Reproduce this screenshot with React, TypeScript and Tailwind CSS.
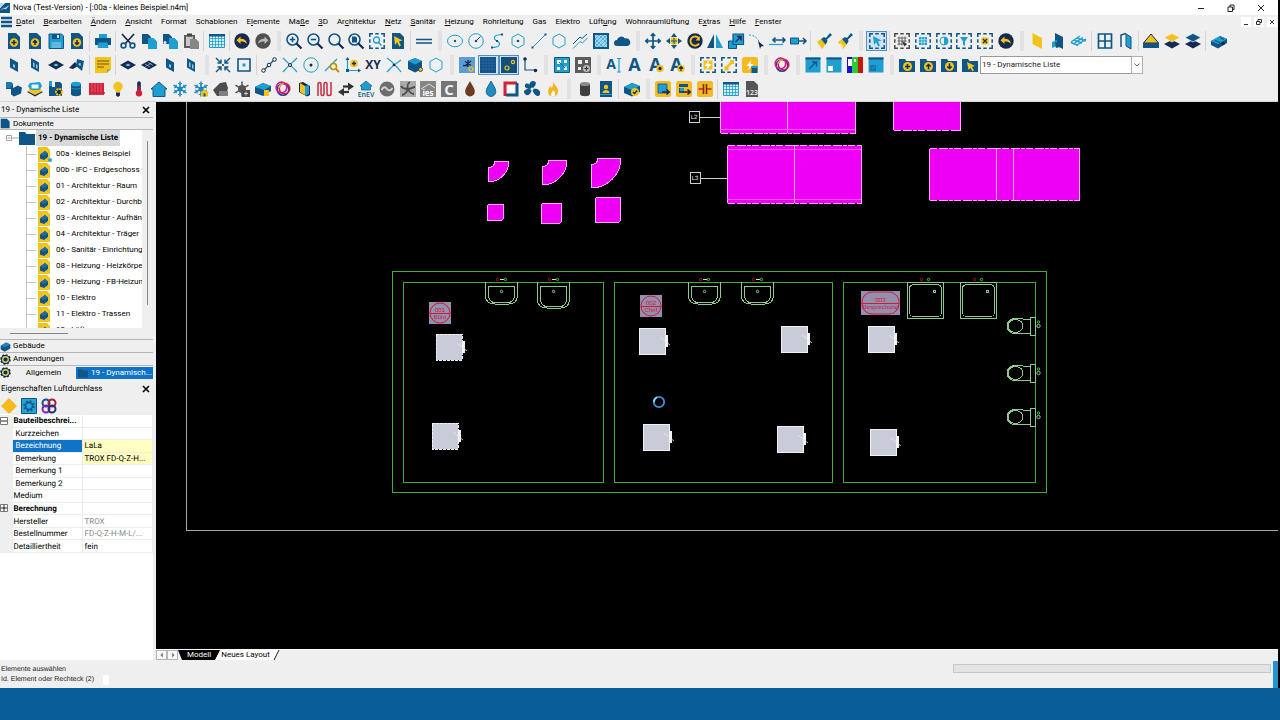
import { useState, type ReactNode } from 'react';
import clsx from 'clsx';

// Icon palette
const B = '#0f5687';
const C = '#1f9fd0';
const Y = '#f3c31d';
const D = '#16294f';
const G = '#5c5c5c';
const R = '#d5203c';

const stroke = (color: string, width = 1.3) => ({ fill: 'none', stroke: color, strokeWidth: width });

/* ---------- shared icon parts ---------- */

const PLUS = 'M8 7v5M5.5 9.5h5';
const UP = 'M8 12V7.5M6 9.5l2-2 2 2';
const DOWN = 'M8 7v4.5M6 9.5l2 2 2-2';

function DocBadge({ d }: { d: string }) {
  return (
    <>
      <path d="M2 0h8l4 4v12H2z" fill={B} />
      <circle cx="8" cy="9.5" r="4.2" fill={Y} />
      <path d={d} {...stroke(D, 1.5)} />
    </>
  );
}

function Folder({ d }: { d?: string }) {
  return (
    <>
      <path d="M0 2h6l1.500 2H16v11H0z" fill={B} />
      {d && <circle cx="8.500" cy="9.500" r="4.500" fill={Y} />}
      {d && <path d={d} {...stroke(D, 1.5)} />}
    </>
  );
}

function Lens({ d }: { d?: string }) {
  return (
    <>
      <circle cx="6.5" cy="6.5" r="5.5" {...stroke(B, 1.6)} />
      <path d="M10.5 10.500L15.500 15.500" {...stroke(D, 2.2)} />
      {d && <path d={d} {...stroke(B, 1.600)} />}
    </>
  );
}

function Marquee({ color = B, children }: { color?: string; children?: ReactNode }) {
  return (
    <>
      <path
        d="M.8 4V.8H4M6.300 .8h3.400M12 .8h3.200V4M15.200 6.300v3.400M15.200 12v3.200H12M9.700 15.200H6.300M4 15.200H.8V12M.8 9.700V6.300"
        {...stroke(color, 1.5)}
      />
      {children}
    </>
  );
}

function Layers({ top, bottom }: { top: string; bottom: string }) {
  return (
    <>
      <path d="M8 7l8 4-8 4.500L0 11z" fill={bottom} />
      <path d="M8 .5l8 4-8 4.500-8-4.500z" fill={top} stroke="#efefef" strokeWidth=".7" />
    </>
  );
}

function Rings() {
  return (
    <>
      <circle cx="8" cy="8.500" r="5.800" {...stroke('#1c3f94', 1.5)} />
      <circle cx="6.500" cy="6.500" r="5.300" {...stroke('#c21fae', 1.7)} />
      <circle cx="9.500" cy="7.500" r="5.300" {...stroke(R, 1.6)} />
      <path d="M4 7a4 4 0 0 1 5-4" {...stroke(Y, 1.200)} />
    </>
  );
}

function Sheet({ children }: { children?: ReactNode }) {
  return (
    <>
      <rect x=".5" y=".5" width="15" height="15" fill={C} />
      <path d="M.5 1.500h15" {...stroke(B, 2)} />
      {children}
    </>
  );
}

function Letter({ children }: { children?: ReactNode }) {
  return (
    <>
      <text x="7.500" y="14" textAnchor="middle" fontSize="18" fontWeight="700" fontFamily="Open Sans" fill={B}>A</text>
      {children}
    </>
  );
}

function Yellow({ children }: { children?: ReactNode }) {
  return (
    <>
      <rect x="0" y="0" width="16" height="16" rx="2.500" fill="#f5b922" />
      {children}
    </>
  );
}

const HEX = 'M8 1l6 3.500v7L8 15l-6-3.500v-7z';
const CURSOR = 'M4 3l8.500 4.500-3.500 1 2 4-1.800 1-2-4.200L5 12z';
const BOLT = 'M9.500 3L4.500 9h3L6 13.500 11.500 7H8.200z';
const CUBE = 'M8 1l7 3v8l-7 3.500L1 12V4z';
const SNOW = 'M8 .5v15M1.500 4.200l13 7.600M1.500 11.800l13-7.600';
const SNOW_TIPS = 'M6 2l2 2 2-2M6 14l2-2 2 2M2 7l2.500-1-.500-2.500M14 7l-2.500-1 .500-2.500M2 9l2.500 1-.500 2.500M14 9l-2.500 1 .500 2.500';
const HOUSE = 'M8 1L0 8h2v7.500h12V8h2z';
const DROP = 'M8 0C6 4 3.200 7 3.200 10.700a4.800 4.800 0 0 0 9.600 0C12.800 7 10 4 8 0z';

const icons: Record<string, ReactNode> = {
  docPlus: <DocBadge d={PLUS} />,
  docUp: <DocBadge d={UP} />,
  docDown: <DocBadge d={DOWN} />,
  docCursor: (
    <>
      <path d="M2 0h8l4 4v12H2z" fill={B} />
      <path d={CURSOR} fill={Y} />
    </>
  ),
  save: (
    <>
      <path d="M1 1h12.500L15.500 3v12.500H1z" fill={C} stroke={B} />
      <path d="M4 1h8v5H4z" fill={B} />
      <path d="M9 2h2v3H9z" fill="#bfe3f3" />
      <path d="M3.500 9h9.500v6H3.500z" fill="#5db9df" />
    </>
  ),
  print: (
    <>
      <path d="M4 1h8v4H4z" fill={C} />
      <path d="M0 5h16v7H0z" fill={B} />
      <path d="M3.500 9.500h9l1 5.500h-11z" fill={C} />
    </>
  ),
  cut: (
    <>
      <path d="M2 1l9 10M14 1L5 11" {...stroke(D, 1.700)} />
      <circle cx="3.500" cy="12.500" r="2.400" {...stroke(B, 1.600)} />
      <circle cx="12.500" cy="12.500" r="2.400" {...stroke(B, 1.600)} />
    </>
  ),
  copy: (
    <>
      <path d="M1 1h6l3 3v7H1z" fill={B} />
      <path d="M7 5h5.500L16 8.500V16H7z" fill={C} />
    </>
  ),
  copyDot: (
    <>
      <path d="M1 1h6l3 3v7H1z" fill={B} />
      <path d="M7 5h5.500L16 8.500V16H7z" fill={C} />
      <circle cx="3" cy="9.500" r="1.500" fill="#e8eef0" />
    </>
  ),
  clipboard: (
    <>
      <path d="M1 2h11v13H1z" fill={G} />
      <path d="M3 3.500h7V13H3z" fill="#c9c9c9" />
      <path d="M4 .5h5v3H4z" fill="#444" />
      <path d="M7 6h6l3 3v7H7z" fill="#858585" />
    </>
  ),
  table: (
    <>
      <path d="M.5 1.500h15v13H.5z" fill="#d9eef7" stroke={C} />
      <path d="M.5 5.500h15M.5 8.500h15M.5 11.500h15M3.500 3v11.500M6.500 3v11.500M9.500 3v11.500M12.500 3v11.500" {...stroke(C, .8)} />
      <path d="M0 1h16v2.500H0z" fill={B} />
    </>
  ),
  undo: (
    <>
      <circle cx="8" cy="8" r="7.700" fill={D} />
      <path d="M6.500 3.500v2.300c4 0 6 1.700 6.500 5-1.700-1.700-3.500-2.200-6.500-2.200V11L2.500 7.200z" fill={Y} />
    </>
  ),
  redo: (
    <>
      <circle cx="8" cy="8" r="7.700" fill="#505050" />
      <path d="M9.500 3.500v2.300c-4 0-6 1.700-6.500 5 1.700-1.700 3.500-2.200 6.500-2.200V11l4-3.800z" fill="#b9b9b9" />
    </>
  ),
  zoomIn: <Lens d="M6.500 3.800v5.400M3.800 6.500h5.400" />,
  zoomOut: <Lens d="M3.800 6.500h5.400" />,
  zoom: <Lens />,
  zoomPage: (
    <>
      <Lens />
      <path d="M4 3.500h3.500l1.500 1.500v4.500H4z" fill={B} />
    </>
  ),
  zoomArea: (
    <Marquee>
      <circle cx="7.500" cy="7" r="3" {...stroke(C, 1.3)} />
      <path d="M9.500 9.500l3 3" {...stroke(C, 1.500)} />
    </Marquee>
  ),
  lines: <path d="M0 6.500h16M0 10h16" {...stroke(B, 1.500)} />,
  ellipse: (
    <>
      <ellipse cx="8" cy="8" rx="7.500" ry="5.800" {...stroke(C, 1)} />
      <circle cx="8" cy="8" r="1.200" fill={B} />
    </>
  ),
  circleLine: (
    <>
      <circle cx="8" cy="8" r="7.300" {...stroke(C, 1)} />
      <path d="M8 8l4.500-4.500" {...stroke(B, 1)} />
      <circle cx="8" cy="8" r="1.300" fill={B} />
    </>
  ),
  spline: (
    <>
      <path d="M13 1.500C4 1.500 4 6 8 8s3.500 6.500-5 6.500" {...stroke(C, 1.200)} />
      <path d="M12 .5h2v2h-2zM7 7h2v2H7zM2 13.500h2v2H2z" fill={B} />
    </>
  ),
  hexDot: (
    <>
      <path d={HEX} {...stroke(C, 1)} />
      <circle cx="8" cy="8" r="1.300" fill={B} />
    </>
  ),
  line: (
    <>
      <path d="M1.500 14.500l13-13" {...stroke(C, 1)} />
      <path d="M.5 13.500h2v2h-2zM13.500 .5h2v2h-2z" fill={B} />
    </>
  ),
  hexagon: <path d={HEX} {...stroke(C, 1)} />,
  polyline: (
    <>
      <path d="M1 11l7-7 2 1.500L15 1" {...stroke(B, 1)} />
      <path d="M1 15.500l7-7L10.500 10 15.500 5" {...stroke(C, 1)} />
    </>
  ),
  hatch: (
    <>
      <path d="M1 1h14v14H1z" fill="#9fd3ea" stroke={B} strokeWidth="2" />
      <path d="M2 6l4-4M2 10l8-8M2 14L14 2M6 14l8-8M10 14l4-4M2 6l8 8M2 10l4 4M6 2l8 8M10 2l4 4" {...stroke(C, .6)} />
    </>
  ),
  cloud: <path d="M3 13a3 3 0 0 1 0-6 4.500 4.500 0 0 1 8-1.500A3.700 3.700 0 0 1 13.500 13z" fill={B} />,
  move: <path d="M8 1v14M1 8h14M5.800 3L8 .8 10.200 3M5.800 13L8 15.200 10.200 13M3 5.800L.8 8 3 10.200M13 5.800L15.200 8 13 10.200" {...stroke(B, 1.700)} />,
  moveY: (
    <>
      <path d="M8 0l3 4H5zM8 16l3-4H5zM0 8l4-3v6zM16 8l-4-3v6z" fill={B} />
      <circle cx="8" cy="8" r="3.800" fill={Y} />
      <path d="M8 5v6M5 8h6" {...stroke(B, 1)} />
    </>
  ),
  rotate: (
    <>
      <circle cx="8" cy="8" r="7.700" fill={D} />
      <path d="M12 10.500A4.600 4.600 0 1 1 11.500 5" {...stroke(Y, 1.900)} />
      <path d="M12.800 3v4.500H8.500z" fill={Y} />
    </>
  ),
  mirror: (
    <>
      <path d="M7 1v14H0z" fill={B} />
      <path d="M9 1v14h7z" fill={C} />
    </>
  ),
  scale: (
    <>
      <path d="M.5 8h8v7.500h-8z" fill={C} stroke={B} />
      <path d="M5 1h10.500v10.500H5z" fill={C} stroke={B} strokeWidth="1.200" />
      <path d="M7.500 9L13 3.500M9 3.500h4v4" {...stroke(D, 1.400)} />
    </>
  ),
  arcArrow: (
    <>
      <path d="M1 2c6 0 10 4 11 10" stroke={C} fill="none" strokeDasharray="2 1.500" />
      <path d="M10 8l6 5-3 .5-1 2.500z" fill={D} />
    </>
  ),
  stretch: (
    <>
      <path d="M4 7h12M6.500 4.500L4 7l2.500 2.500M13.500 4.500L16 7l-2.500 2.500" {...stroke(B, 1.600)} />
      <path d="M0 11.500h14" {...stroke(C, 1.200)} />
    </>
  ),
  extend: (
    <>
      <path d="M.5 5h8v6h-8z" fill={C} stroke={B} />
      <path d="M8 8h7.500M13 5l3 3-3 3" {...stroke(B, 1.500)} />
    </>
  ),
  brush: (
    <>
      <path d="M1 9l4-3 5 5-4 5z" fill={Y} />
      <path d="M5 6l3-2 2 1L14 0l2 2-5 4.500.5 2-2 3z" fill={B} />
    </>
  ),
  brushLight: (
    <>
      <path d="M1 9l4-3 5 5-4 5z" fill={Y} />
      <path d="M3 11l3 3" {...stroke('#fff3c0')} />
      <path d="M5 6l3-2 2 1L14 0l2 2-5 4.500.5 2-2 3z" fill={B} />
    </>
  ),
  selArrow: (
    <Marquee>
      <path d={CURSOR} fill={C} />
    </Marquee>
  ),
  selPoly: (
    <Marquee color="#4a4a4a">
      <path d="M3.500 5h9M3.500 8h9M3.500 11h7M5 3.500v9M8 3.500v9M11 3.500v6" {...stroke('#666', 1)} />
      <path d="M8 8l5 3-2.500 2.500z" fill="#333" />
    </Marquee>
  ),
  selGrid: (
    <Marquee>
      <path d="M4 4h8v8H4z" fill={C} />
      <path d="M4 6.700h8M4 9.300h8M6.700 4v8M9.300 4v8" {...stroke('#e5f3f9', .6)} />
    </Marquee>
  ),
  selHalf: (
    <Marquee>
      <circle cx="8" cy="8" r="4" {...stroke(C, 1)} />
      <path d="M8 4a4 4 0 0 1 0 8z" fill={C} />
    </Marquee>
  ),
  selFilter: (
    <Marquee>
      <path d="M4 4h8L9 8.500V13l-2-1.200V8.500z" fill={C} />
    </Marquee>
  ),
  selX: (
    <Marquee>
      <path d="M4.500 4.500h7v7h-7z" fill={Y} />
      <path d="M6 6l4 4M10 6l-4 4" {...stroke(D, 1.300)} />
    </Marquee>
  ),
  wallYellow: <path d="M3.500 0L13 5v11l-9.500-5z" fill={Y} />,
  wallNiche: (
    <>
      <path d="M5 0l8 4v12l-8-4z" fill={B} />
      <path d="M2 9l5-2v6l-5 2z" fill={C} />
      <path d="M5 9l5 1v4l-4 1z" fill={B} />
    </>
  ),
  slabHatch: <path d="M0 9l9-6M3 10.500l9-6M6 12l9-6M0 9.500l7 3M3 7l8 3M6 5l9 3" {...stroke(C, 1.500)} />,
  window: <path d="M1.500 1h13v14h-13zM8 1v14M1.500 8h13" {...stroke(B, 1.700)} />,
  door: (
    <>
      <path d="M3 14V2l5-1.500" {...stroke(B, 1.500)} />
      <path d="M8 1l5 3v12l-5-3z" fill={C} stroke={B} />
    </>
  ),
  roof: (
    <>
      <path d="M8 1l7.500 9H.5z" fill={Y} stroke={D} />
      <path d="M0 10h16v5H0z" fill={B} />
    </>
  ),
  layersYellow: <Layers top={Y} bottom={D} />,
  layersNavy: <Layers top={B} bottom={D} />,
  duct: (
    <>
      <path d="M0 8l9-5 7 3v4l-9 5.500L0 12z" fill={B} />
      <path d="M0 8l9-5 7 3-9 5z" fill={C} />
      <path d="M4 7.500l5 2M9 4.500l4 2" {...stroke(D, .8)} />
      <circle cx="12" cy="10.500" r="1.800" fill={D} />
    </>
  ),
  wall: (
    <>
      <path d="M4 1l8 4.500V15l-8-4.500z" fill={B} />
      <path d="M7 7l2 1v3l-2-1z" fill="#8ccbe8" />
    </>
  ),
  wallWin: (
    <>
      <path d="M4 1l8 4.500V15l-8-4.500z" fill={B} />
      <path d="M6 5l1.500 1v4.500L6 9.500zM9 7l1.500 1v4L9 11z" fill="#8ccbe8" />
    </>
  ),
  slab: (
    <>
      <path d="M8 3.500L16 8l-8 4.500L0 8z" fill={D} />
      <path d="M8 6.500L10.500 8 8 9.500 5.500 8z" fill="#6fbde0" />
    </>
  ),
  slabGrid: (
    <>
      <path d="M8 3.500L16 8l-8 4.500L0 8z" fill={D} />
      <path d="M4 7l5 3M7 5.500l5 3M4.500 9.500l6-3.500" {...stroke('#8ab5cc', .8)} />
    </>
  ),
  roofPlane: (
    <>
      <path d="M0 11L6 5l3 4-5 3z" fill={D} />
      <path d="M8 2l7 2-2 10-6-5z" fill={B} />
      <path d="M10 6l2 .5-.5 2.500-2-1z" fill="#8ccbe8" />
    </>
  ),
  note: (
    <>
      <path d="M0 0h16v12l-4 4H0z" fill={Y} />
      <path d="M2 4h12M2 7h12M2 10h7" {...stroke('#6b5a10', 1.200)} />
      <path d="M12 16v-4h4z" fill="#b9a15a" />
    </>
  ),
  shrink: (
    <>
      <path d="M1 1l5 5M6 2.500V6H2.500M15 1l-5 5M10 2.500V6h3.500M1 15l5-5M6 13.500V10H2.500M15 15l-5-5M10 13.500V10h3.500" {...stroke(B, 1.400)} />
      <circle cx="8" cy="8" r="1" fill={D} />
    </>
  ),
  squareDot: (
    <>
      <path d="M2 2h12v12H2z" {...stroke(B, 1.600)} />
      <path d="M6.500 6.500h3v3h-3z" fill={C} />
    </>
  ),
  lineNodes: (
    <>
      <path d="M2 14L14 2" {...stroke(B, 1.200)} />
      <circle cx="2.500" cy="13.500" r="1.800" fill="#efefef" stroke={D} />
      <circle cx="8" cy="8" r="1.800" fill="#efefef" stroke={D} />
      <circle cx="13.500" cy="2.500" r="1.800" fill="#efefef" stroke={D} />
    </>
  ),
  intersect: (
    <>
      <path d="M1 1c6 6 9 8 14 14M1 15C6 9 10 6 15 1" {...stroke(C, 1.200)} />
      <circle cx="8" cy="8" r="1.500" fill="#efefef" stroke={D} />
    </>
  ),
  circleDot: (
    <>
      <circle cx="8" cy="8" r="7.200" {...stroke(C, 1)} />
      <circle cx="8" cy="8" r="1.500" fill={D} />
    </>
  ),
  tangent: (
    <>
      <path d="M1 14L13 2" {...stroke(C, 1.200)} />
      <circle cx="9.500" cy="9.500" r="3" fill="#fff3c4" stroke="#b58d10" strokeWidth="1.500" />
      <path d="M12 12l3 3" {...stroke('#b58d10', 1.800)} />
    </>
  ),
  axis: (
    <>
      <path d="M2.500 1v12.500H15" {...stroke(C, 1.200)} />
      <path d="M2.500 0l2 3h-4zM16 13.500l-3 2v-4zM1 12h3v3H1z" fill={B} />
      <circle cx="9" cy="6.500" r="3.800" fill={Y} />
      <path d="M9 4.500v4M7 6.500h4" {...stroke(D, 1.300)} />
    </>
  ),
  xy: <text x="8" y="12" textAnchor="middle" fontSize="12" fontWeight="700" fontFamily="Open Sans" fill={D}>XY</text>,
  cross: (
    <>
      <path d="M1 1c6 4 9 8 14 14M1 15C6 9 10 6 15 3" {...stroke(C, 1.200)} />
      <circle cx="8" cy="8" r="1.300" fill={D} />
    </>
  ),
  cube: (
    <>
      <path d={CUBE} fill={B} />
      <path d="M8 1l7 3-7 3.500L1 4z" fill={C} />
      <circle cx="13.500" cy="12.500" r="2" fill={Y} stroke={D} strokeWidth=".8" />
    </>
  ),
  snapStar: (
    <>
      <path d="M0 0h16v16H0z" fill="#5d9ed0" />
      <path d="M4 8.500h5M6 4.500l6 4M6 9l6-5M9 3v7" {...stroke(D, 1.300)} />
      <circle cx="12" cy="12" r="2" {...stroke(Y, 1.200)} />
    </>
  ),
  grid: (
    <>
      <path d="M0 0h16v16H0z" fill="#134f86" />
      <path d="M3 0v16M6 0v16M9 0v16M12 0v16M0 3h16M0 6h16M0 9h16M0 12h16" {...stroke('#2f74ad', .5)} />
    </>
  ),
  gridDots: (
    <>
      <path d="M0 0h16v16H0z" fill="#134f7c" />
      <circle cx="12" cy="5" r="1.600" {...stroke(Y, 1.200)} />
      <circle cx="6" cy="11" r="2" {...stroke(Y, 1.200)} />
    </>
  ),
  ortho: (
    <>
      <path d="M3 2v11h11" {...stroke(B, 1.200)} />
      <circle cx="3" cy="2" r="1.800" fill={D} />
      <circle cx="13.500" cy="13.500" r="1.800" fill={D} />
    </>
  ),
  dots4: (
    <>
      <path d="M.5 .5h15v15H.5z" fill={C} stroke={B} />
      <path d="M3 3h4v4H3zM10 3h3v3h-3zM3 10h3v3H3zM10 9.500h3v3.500h-3z" fill="#fff" />
      <path d="M5 5l6 6" {...stroke(B, 1)} />
    </>
  ),
  dots4Gray: (
    <>
      <path d="M0 0h16v16H0z" fill={G} />
      <path d="M3 3h4v4H3zM10 3h3v3h-3zM3 10h3v3H3z" fill="#eee" />
      <circle cx="11.500" cy="11.500" r="3.500" fill="#bbb" />
      <path d="M11.500 9.500v4M9.500 11.500h4" {...stroke('#333', 1.200)} />
    </>
  ),
  textCursor: (
    <>
      <text x="5" y="12" textAnchor="middle" fontSize="14" fontWeight="700" fontFamily="Open Sans" fill={B}>A</text>
      <path d="M13 2v13M11 1.500h4M11 15h4" {...stroke(C, 1.200)} />
    </>
  ),
  letter: <Letter />,
  letterGear: (
    <Letter>
      <circle cx="12" cy="11.500" r="2.700" fill={D} stroke={Y} strokeWidth="2" />
    </Letter>
  ),
  letterUp: (
    <Letter>
      <circle cx="12" cy="11.500" r="3.700" fill={Y} />
      <path d="M12 14V9.500M10 11.500l2-2 2 2" {...stroke(D, 1.200)} />
    </Letter>
  ),
  selBolt: (
    <Marquee>
      <path d="M3.500 3.500h9v9h-9z" fill={Y} />
      <path d={BOLT} fill="#fff" />
    </Marquee>
  ),
  selLink: (
    <Marquee>
      <path d="M4 12l8-8" {...stroke(Y, 2.500)} />
      <path d="M3.500 9.500h4v4h-4zM9 3h4v4H9z" fill={Y} />
    </Marquee>
  ),
  boltDoc: (
    <Yellow>
      <path d={BOLT} fill="#fff" />
      <path d="M9.500 9h6v7h-6z" fill={B} />
      <path d="M9.500 9h6v2h-6z" fill={C} />
    </Yellow>
  ),
  rings: <Rings />,
  sheetExpand: (
    <Sheet>
      <path d="M4 12l7-7M7 5h4.500v4.500" {...stroke(B, 1.400)} />
    </Sheet>
  ),
  sheetCorner: (
    <Sheet>
      <path d="M2 9h5v5H2z" fill="#fff" />
    </Sheet>
  ),
  rgb: (
    <>
      <path d="M0 0h5.500v16H0z" fill="#1414c8" />
      <path d="M5.500 0H11v16H5.500z" fill="#21d321" />
      <path d="M11 0h5v16h-5z" fill="#c81414" />
      <path d="M1 2h4v7H1zM7 2h2v3H7z" fill="#fff" />
    </>
  ),
  sheetShrink: (
    <Sheet>
      <path d="M2 8h6v6H2z" fill="#1679ab" />
      <path d="M4 12l3-3" {...stroke(C, 1)} />
    </Sheet>
  ),
  folderPlus: <Folder d="M8.500 7v5M6 9.500h5" />,
  folderUp: <Folder d="M8.500 12.500V7.500M6.300 9.500l2.200-2 2.200 2" />,
  folderDown: <Folder d="M8.500 6.500v5M6.300 9.500l2.200 2 2.200-2" />,
  folderCursor: (
    <>
      <Folder />
      <path d="M5 5l8 4-3 1 2 3.500-1.500 1-2-3.500L6.500 13z" fill={Y} />
    </>
  ),
  folder: <Folder />,
  cubes: (
    <>
      <path d="M0 1h5l2 2v5H0z" fill={B} />
      <path d="M5 8l7-3.500 4 2-1 6-7 3-3-2z" fill={B} />
      <path d="M0 1h5l2 2-3 4H0z" fill="#2079ae" />
    </>
  ),
  stack: (
    <>
      <path d="M8 8l8 3-8 4.500L0 11z" fill={D} />
      <path d="M2 6h12v5l-6 3-6-3z" fill={Y} />
      <path d="M3 2l10-1 2 4-3 4H4L1 5z" fill={C} />
      <path d="M4.500 3.500h7v4h-7z" fill="#e6f4fa" />
    </>
  ),
  docGear: (
    <>
      <path d="M1 3h3v3h3V1h5l2 2v12H1z" fill={B} />
      <path d="M1 0h3v5H1z" fill={C} />
      <circle cx="11" cy="11" r="3" fill={D} stroke={Y} strokeWidth="2" strokeDasharray="2 .8" />
    </>
  ),
  cylinder: (
    <>
      <path d="M3 3v10c0 3 10 3 10 0V3z" fill={B} />
      <ellipse cx="8" cy="3" rx="5" ry="2.300" fill={C} />
      <path d="M3 6.500c0 2 10 2 10 0" {...stroke(C, .8)} />
    </>
  ),
  radiator: (
    <>
      <path d="M0 2h15v12H0z" fill={R} />
      <path d="M3 2v12M6 2v12M9 2v12M12 2v12" {...stroke('#ee8593', .6)} />
      <path d="M0 12h16" {...stroke(R, 1.500)} />
    </>
  ),
  bulb: (
    <>
      <circle cx="8" cy="5.500" r="4.700" fill={Y} />
      <path d="M5.500 9h5v2h-5z" fill={Y} />
      <path d="M6 11.500h4v3l-2 1.500-2-1.500z" fill={D} />
    </>
  ),
  thermo: (
    <>
      <path d="M6.200 2a1.800 1.800 0 0 1 3.600 0v8H6.200z" fill={D} />
      <circle cx="8" cy="12.300" r="3.200" fill={R} />
      <path d="M8 5v7" {...stroke(R, 1.500)} />
    </>
  ),
  house: <path d={HOUSE} fill={C} stroke={B} />,
  snow: (
    <>
      <path d={SNOW} {...stroke('#1a86c0', 1.500)} />
      <path d={SNOW_TIPS} {...stroke('#1a86c0', 1)} />
      <circle cx="8" cy="8" r="2.500" fill="#1a86c0" />
    </>
  ),
  snowHouse: (
    <>
      <path d={SNOW} {...stroke('#1a86c0', 1.500)} />
      <path d={SNOW_TIPS} {...stroke('#1a86c0', 1)} />
      <circle cx="8" cy="8" r="2.500" fill="#1a86c0" />
      <path d="M11.500 8l-4.500 4h1v3.500h7V12h1z" fill={Y} />
      <path d="M10.500 12.500h2v3h-2z" fill={B} />
    </>
  ),
  houseGray: (
    <>
      <path d="M0 9l7-7 6-1 2 6-2 8H4z" fill="#4d4d4d" />
      <path d="M6 10h9v5H6z" fill="#808080" />
    </>
  ),
  snowGray: (
    <>
      <path d={SNOW} {...stroke('#555', 1.500)} />
      <circle cx="8" cy="8" r="4" fill="#555" />
      <path d="M8 9h8v7H8z" fill="#4a4a4a" />
      <path d="M12 10.500v4M10 12.500h4" {...stroke('#ccc', 1)} />
    </>
  ),
  ductBox: (
    <>
      <path d="M0 6l8-4 8 3v5l-8 5-8-3z" fill={B} />
      <path d="M0 6l8-4 8 3-7 4z" fill={C} />
      <path d="M9 9h5v6H9z" fill={Y} />
    </>
  ),
  panel: (
    <>
      <path d="M3 2l4-1 7 4v9l-3 1.500L3 11z" fill={D} />
      <path d="M4 2l5 3v9l-5-3z" fill={Y} />
      <path d="M9 5l4-1v9l-4 2z" fill={C} />
    </>
  ),
  coil: <path d="M1 15V3c0-2 3-2 3 0v10c0 2 3 2 3 0V3c0-2 3-2 3 0v10c0 2 4 2 4 0V1" {...stroke('#c92b40', 1.500)} />,
  arrows: (
    <>
      <path d="M5 5.500h7" {...stroke('#333', 2.200)} />
      <path d="M10 1.500l6 4-6 4z" fill="#333" />
      <path d="M4 11h7" {...stroke('#333', 2.200)} />
      <path d="M6 7l-6 4 6 4z" fill="#333" />
    </>
  ),
  enev: (
    <>
      <path d="M8 0L2 5h1.500v4h9V5H14z" fill={C} stroke={B} strokeWidth=".7" />
      <text x="8" y="16" textAnchor="middle" fontSize="7" fontWeight="600" fontFamily="Open Sans" fill={B}>EnEV</text>
    </>
  ),
  wave: (
    <>
      <circle cx="8" cy="8" r="7.500" fill="#6d6d6d" />
      <path d="M2.500 9c2-4 4-3 5.500-1s3.500 2 5.500-1" {...stroke('#d8d8d8', 1.800)} />
    </>
  ),
  fanGray: (
    <>
      <path d="M0 0h16v16H0z" fill="#a9a9a9" />
      <path d="M8 8c-1-3 0-6 2-7M8 8C5 8 2 7 1 5M8 8c3 0 5-2 7-2M8 8c1 3 4 5 6 5M8 8c-1 3-4 6-6 6" {...stroke('#4b4b4b', 1.800)} />
    </>
  ),
  ies: (
    <>
      <path d="M0 0h16v16H0z" fill="#858585" />
      <path d="M1 8L9 3l6 4" {...stroke('#ddd', 1)} />
      <text x="8" y="14.500" textAnchor="middle" fontSize="8" fontWeight="700" fontFamily="Open Sans" fill="#fff">ies</text>
    </>
  ),
  letterC: (
    <>
      <path d="M0 0h16v16H0z" fill="#757575" />
      <text x="8" y="13.500" textAnchor="middle" fontSize="15" fontWeight="700" fontFamily="Open Sans" fill="#f0f0f0">C</text>
    </>
  ),
  dropBrown: <path d={DROP} fill="#6d3b23" />,
  dropBlue: <path d={DROP} fill="#1f8cc4" stroke={B} strokeWidth=".8" />,
  squareRed: (
    <>
      <path d="M2 15V2h12" {...stroke(R, 3)} />
      <path d="M3 14h11V2" {...stroke(B, 3)} />
      <path d="M5 5h6v6H5z" fill="#fff" />
    </>
  ),
  fan: (
    <>
      <path d="M8 8C4 6 5 0 9 0s4 4-1 8zM8 8c5-1 9 1 8 5s-6 2-8-5zM8 8c-1 5-4 8-7 5s1-6 7-5zM8 8c-4 0-8-1-7-4s6-1 7 4z" fill={B} />
      <circle cx="8" cy="8" r="1.500" fill="#efefef" />
    </>
  ),
  flame: (
    <>
      <path d="M8 0c1 4 5 5.500 5 10a5 5 0 0 1-10 1c0-3 1.500-3.500 2-6 1 .5 1.500 1.500 1.500 2.500C8 5 8.500 3 8 0z" fill="#f6b320" />
      <path d="M8 9c2 2 2.500 3 2 4.500a2 2 0 0 1-4 0C6 12 7.500 11 8 9z" fill="#fff" />
    </>
  ),
  cylGray: (
    <>
      <path d="M3 3v10c0 3 10 3 10 0V3z" fill="#3f3f3f" />
      <ellipse cx="8" cy="3" rx="5" ry="2" fill="#8b8b8b" />
    </>
  ),
  contact: (
    <>
      <path d="M2 0h12v16H2z" fill={B} />
      <circle cx="8" cy="6" r="2.200" fill={Y} />
      <path d="M4.500 12c0-4 7-4 7 0z" fill={Y} />
      <path d="M2 13.500h12" {...stroke(C, 1)} />
    </>
  ),
  cubeCheck: (
    <>
      <path d="M0 6l8-4 8 3v6l-8 4.500L0 12z" fill={B} />
      <path d="M0 6l8-4 8 3-8 4z" fill={C} />
      <circle cx="11" cy="11" r="4" fill={Y} />
      <path d="M9 11l1.500 1.500L13.200 9.500" {...stroke(D, 1.300)} />
    </>
  ),
  boxArrow: (
    <Yellow>
      <path d="M3 3h9v9H3z" fill={C} stroke={B} strokeWidth=".8" />
      <path d="M7 11h7M11.500 8.500l2.800 2.500-2.800 2.500" {...stroke(D, 1.500)} />
    </Yellow>
  ),
  boxArrow2: (
    <Yellow>
      <path d="M3 3h9v3H3zM3 7h5v5H3z" fill={B} />
      <path d="M4 7h4v3H4z" fill={C} />
      <path d="M7 11h7M11.500 8.500l2.800 2.500-2.800 2.500" {...stroke(D, 1.500)} />
    </Yellow>
  ),
  boxCircuit: (
    <Yellow>
      <path d="M1.500 8h5M9.500 8h5" {...stroke(R, 1.500)} />
      <path d="M6.500 3v10M9.500 3v10" {...stroke('#7a2a1a', 1.600)} />
    </Yellow>
  ),
  doc123: (
    <>
      <path d="M2 0h8l4 4v12H2z" fill="#555" />
      <text x="8" y="14" textAnchor="middle" fontSize="7" fontWeight="700" fontFamily="Open Sans" fill="#ddd">123</text>
    </>
  ),
  treeDoc: (
    <>
      <path d="M2 1h9l3 3v12H2z" fill={Y} />
      <path d="M4 8.500l5-3.500 3 2.500v3.500l-4 3-4-1.500z" fill={B} />
      <path d="M4 8.500l5-3.500 3 2.500-4 2.500z" fill="#1b6da3" />
    </>
  ),
  docs: <path d="M1 1h9l4 4v10H1z" fill={B} />,
  building: (
    <>
      <path d="M1 7l8-5 6 3v6l-8 4.500-6-3z" fill={B} />
      <path d="M1 7l8-5 6 3-8 4z" fill="#2383b8" />
    </>
  ),
  gear: (
    <>
      <circle cx="8" cy="8" r="6.500" fill={D} stroke={D} strokeWidth="2.500" strokeDasharray="3 2" />
      <circle cx="8" cy="8" r="4" {...stroke('#cfd45a', 2)} />
    </>
  ),
  diamond: <path d="M8 0l8 8-8 8-8-8z" fill="#f6ba1c" />,
  gearBlue: (
    <>
      <path d="M.5 .5h15v15H.5z" fill="#29a3d6" stroke={B} />
      <circle cx="8" cy="8" r="3.500" {...stroke(B, 1.500)} />
      <circle cx="8" cy="8" r="5" stroke={B} fill="none" strokeWidth="1.500" strokeDasharray="2 1.930" />
    </>
  ),
  knot: (
    <>
      <circle cx="5" cy="5" r="3.500" {...stroke(B, 2)} />
      <circle cx="11" cy="5" r="3.500" {...stroke('#a02038', 2)} />
      <circle cx="5" cy="11" r="3.500" {...stroke('#8c1fb8', 2)} />
      <circle cx="11" cy="11" r="3.500" {...stroke('#2b2f7a', 2)} />
    </>
  ),
  app: (
    <>
      <path d="M0 0h16v16H0z" fill={B} />
      <path d="M0 0h8l-8 8zM2 11l4-3 3 2 5-6" fill="#9ed2ec" stroke="#fff" strokeWidth=".8" />
    </>
  ),
};

function Icon({ name, className = 'size-4' }: { name: string; className?: string }) {
  return (
    <svg viewBox="0 0 16 16" className={clsx('shrink-0 overflow-visible', className)} aria-hidden="true">
      {icons[name]}
    </svg>
  );
}

/* ---------- toolbars ---------- */

const PRESSED = ['selArrow', 'grid', 'gridDots'];

function Tools({ names, width }: { names: string; width: string }) {
  return (
    <div className={clsx('flex shrink-0 justify-around', width)}>
      {names.split(' ').map((name, index) => (
        <button
          key={`${name}-${index}`}
          type="button"
          aria-label={name}
          className={clsx(
            'flex h-5 flex-1 items-center justify-center',
            PRESSED.includes(name) && 'bg-[#cfe3f5] outline outline-[#4f8fc4] -outline-offset-1'
          )}
        >
          <Icon name={name} />
        </button>
      ))}
    </div>
  );
}

function Separator() {
  return (
    <div className="flex w-[5px] shrink-0 justify-center">
      <div className="h-5 w-px bg-[#d4d4d4]" />
    </div>
  );
}

function Grip() {
  return (
    <div className="flex w-[11px] shrink-0 justify-center">
      <div className="h-5 w-1 bg-[radial-gradient(#c4c4c4_1px,transparent_1px)] bg-size-[2px_2px] opacity-30" />
    </div>
  );
}

function Toolbars() {
  return (
    <div className="bg-[#efefef] pl-1">
      <div className="flex h-6 items-center">
        <Tools width="w-[83px]" names="docPlus docUp save docDown" />
        <Separator />
        <Tools width="w-[21px]" names="print" />
        <Separator />
        <Tools width="w-[83px]" names="cut copy copyDot clipboard" />
        <Separator />
        <Tools width="w-[21px]" names="table" />
        <Separator />
        <Tools width="w-[41px]" names="undo redo" />
        <Grip />
        <Tools width="w-[124px]" names="zoomIn zoomOut zoom zoomPage zoomArea docCursor" />
        <Separator />
        <Tools width="w-[21px]" names="lines" />
        <Grip />
        <Tools width="w-[187px]" names="ellipse circleLine spline hexDot line hexagon polyline hatch cloud" />
        <Grip />
        <Tools width="w-[165px]" names="move moveY rotate mirror scale arcArrow stretch extend" />
        <Separator />
        <Tools width="w-[42px]" names="brush brushLight" />
        <Grip />
        <Tools width="w-[21px]" names="selArrow" />
        <Separator />
        <Tools width="w-[124px]" names="selPoly selGrid selHalf selFilter selX undo" />
        <Grip />
        <Tools width="w-[62px]" names="wallYellow wallNiche slabHatch" />
        <Separator />
        <Tools width="w-[42px]" names="window door" />
        <Separator />
        <Tools width="w-[62px]" names="roof layersYellow layersNavy" />
        <Separator />
        <Tools width="w-[21px]" names="duct" />
      </div>
      <div className="flex h-6 items-center">
        <Tools width="w-[83px]" names="wall wallWin slab roofPlane" />
        <Separator />
        <Tools width="w-[21px]" names="note" />
        <Separator />
        <Tools width="w-[83px]" names="slab slabGrid wall wallWin" />
        <Grip />
        <Tools width="w-[42px]" names="shrink squareDot" />
        <Separator />
        <Tools width="w-[187px]" names="lineNodes intersect circleDot tangent axis xy cross cube hexagon" />
        <Grip />
        <Tools width="w-[83px]" names="snapStar grid gridDots ortho" />
        <Grip />
        <Tools width="w-[42px]" names="dots4 dots4Gray" />
        <Grip />
        <Tools width="w-[83px]" names="textCursor letter letterGear letterUp" />
        <Grip />
        <Tools width="w-[62px]" names="selBolt selLink boltDoc" />
        <Grip />
        <Tools width="w-[21px]" names="rings" />
        <Grip />
        <Tools width="w-[83px]" names="sheetExpand sheetCorner rgb sheetShrink" />
        <Grip />
        <Tools width="w-[83px]" names="folderPlus folderUp folderDown folderCursor" />
        <div className="relative flex">
          <select
            aria-label="Liste"
            className="h-[18px] w-[163px] appearance-none border border-[#9a9a9a] bg-white pl-px text-[8px] text-[#222]"
          >
            <option>19 - Dynamische Liste</option>
          </select>
          <svg viewBox="0 0 12 18" className="pointer-events-none absolute top-0 right-0 h-[18px] w-3" aria-hidden="true">
            <path d="M.5 .5h11v17H.5z" {...stroke('#b0b0b0', 1)} />
            <path d="M3.500 7.500L6 10l2.500-2.500" {...stroke('#666', 1)} />
          </svg>
        </div>
      </div>
      <div className="flex h-6 items-center">
        <Tools
          width="w-[559px]"
          names="cubes stack docGear cylinder radiator bulb thermo house snow snowHouse houseGray snowGray ductBox rings panel coil arrows enev wave fanGray ies letterC dropBrown dropBlue squareRed fan flame"
        />
        <Grip />
        <Tools width="w-[42px]" names="cylGray contact" />
        <Separator />
        <Tools width="w-[21px]" names="cubeCheck" />
        <Grip />
        <Tools width="w-[62px]" names="boxArrow boxArrow2 boxCircuit" />
        <Separator />
        <Tools width="w-[42px]" names="table doc123" />
      </div>
    </div>
  );
}

/* ---------- title and menu ---------- */

// The character after "_" is the underlined access key
const MENU = [
  '_Datei', '_Bearbeiten', '_Ändern', '_Ansicht', 'Format', 'Schablonen', 'E_lemente', 'Ma_ße', '_3D',
  'Ar_chitektur', '_Netz', '_Sanitär', '_Heizung', 'Rohrleitung', 'Gas', 'Elektro', 'Lüft_ung',
  'Wohnraumlüftung', 'E_xtras', '_Hilfe', '_Fenster',
];

function MenuLabel({ text }: { text: string }) {
  const at = text.indexOf('_');
  if (at < 0) return <>{text}</>;
  return (
    <>
      {text.slice(0, at)}
      <span className="underline">{text[at + 1]}</span>
      {text.slice(at + 2)}
    </>
  );
}

function TitleBar() {
  return (
    <header>
      <div className="flex h-[15px] items-center bg-white">
        <Icon name="app" className="size-[10px]" />
        <h1 className="ml-[3px] flex-1 text-[8px]">Nova (Test-Version) - [:00a - kleines Beispiel.n4m]</h1>
        <div className="flex gap-[14px] pr-[9px] text-[#222]">
          <button type="button" aria-label="Minimieren" className="flex w-4 justify-center">
            <svg viewBox="0 0 8 8" className="size-2"><path d="M1 4.500h6" stroke="currentColor" /></svg>
          </button>
          <button type="button" aria-label="Verkleinern" className="flex w-4 justify-center">
            <svg viewBox="0 0 8 8" className="size-2">
              <path d="M1 3h4.500v4.500H1zM3 3V1h4v4.500H5.500" fill="none" stroke="currentColor" />
            </svg>
          </button>
          <button type="button" aria-label="Schließen" className="flex w-4 justify-center">
            <svg viewBox="0 0 8 8" className="size-2"><path d="M1 1l6 6M7 1L1 7" stroke="currentColor" /></svg>
          </button>
        </div>
      </div>
      <nav className="flex h-[14px] items-center bg-[#efefef]">
        <svg viewBox="0 0 11 12" className="mr-1 ml-px h-3 w-[11px]" aria-hidden="true">
          <path d="M0 2h11M0 6h11M0 10h11" {...stroke(B, 2.500)} />
        </svg>
        <div className="flex flex-1 gap-[9px]">
          {MENU.map((item) => (
            <button key={item} type="button" className="text-[8px] whitespace-nowrap">
              <MenuLabel text={item} />
            </button>
          ))}
        </div>
        <div className="flex gap-[3px] pr-px text-[#333]">
          {['M2 6.500h4', 'M1.500 3.500h3.500v3H1.500zM3 3.500V1.500h3.500v3H5', 'M2 2l4 4M6 2L2 6'].map((d) => (
            <button key={d} type="button" aria-label="Fenster" className="flex size-[10px] items-center justify-center bg-white">
              <svg viewBox="0 0 8 8" className="size-2"><path d={d} fill="none" stroke="currentColor" /></svg>
            </button>
          ))}
        </div>
      </nav>
    </header>
  );
}

/* ---------- left side ---------- */

const DOCUMENTS = [
  '00a - kleines Beispiel', '00b - IFC - Erdgeschoss Gesamt', '01 - Architektur - Raum', '02 - Architektur - Durchbruch',
  '03 - Architektur - Aufhängung', '04 - Architektur - Träger', '06 - Sanitär - Einrichtung', '08 - Heizung - Heizkörper',
  '09 - Heizung - FB-Heizung', '10 - Elektro', '11 - Elektro - Trassen', '12 - Lüftung',
];

function PanelHeader({ title }: { title: string }) {
  return (
    <div className="flex h-[15px] items-center justify-between pr-[3px] pl-px">
      <h2>{title}</h2>
      <button type="button" aria-label="Schließen">
        <svg viewBox="0 0 8 8" className="size-2"><path d="M1 1l6 6M7 1L1 7" stroke="#000" strokeWidth="1.600" /></svg>
      </button>
    </div>
  );
}

function DocumentTree() {
  const [selected, setSelected] = useState(DOCUMENTS[0]);

  return (
    <div className="flex h-[211px] flex-col border-y border-[#b5b5b5]">
      <div className="flex min-h-0 flex-1">
        <div className="w-[142px] overflow-hidden bg-white">
          <div className="flex h-4 items-center pl-[5px]">
            <svg viewBox="0 0 14 16" className="h-4 w-[14px]" aria-hidden="true">
              <path d="M1.500 5.500h5v5h-5zM2.500 8h3M7 8h7" {...stroke('#a5a5a5', 1)} />
            </svg>
            <Icon name="folder" />
            <span className="ml-px bg-[#d9d9d9] px-[2px] leading-4 font-bold">19 - Dynamische Liste</span>
          </div>
          <ul className="ml-[26px] border-l border-[#c4c4c4]">
            {DOCUMENTS.map((name) => (
              <li key={name}>
                <button type="button" onClick={() => setSelected(name)} className="flex h-4 items-center whitespace-nowrap">
                  <span className="h-px w-[9px] bg-[#c4c4c4]" />
                  <span className="relative mr-1 flex">
                    <Icon name="treeDoc" />
                    {selected === name && <span className="absolute right-0 bottom-0 size-1 rounded-full bg-[#2fa5d8]" />}
                  </span>
                  {name}
                </button>
              </li>
            ))}
          </ul>
        </div>
        <div className="flex flex-1 justify-center pt-[11px]">
          <div className="h-[164px] w-px bg-[#858585]" />
        </div>
      </div>
      <div className="h-[11px] pt-[5px] pl-[10px]">
        <div className="h-px w-[58px] bg-[#858585]" />
      </div>
    </div>
  );
}

function SectionBar({ icon, label }: { icon: string; label: string }) {
  return (
    <button type="button" className="flex h-[13px] w-full items-center gap-[2px] border-b border-[#b5b5b5]">
      <Icon name={icon} className="size-[11px]" />
      {label}
    </button>
  );
}

interface PropertyRow {
  label: string;
  value?: string;
  group?: '+' | '-';
  child?: boolean;
  highlight?: boolean;
  readOnly?: boolean;
}

const PROPERTIES: PropertyRow[] = [
  { label: 'Bauteilbeschrei...', group: '-' },
  { label: 'Kurzzeichen', child: true },
  { label: 'Bezeichnung', value: 'LaLa', child: true, highlight: true },
  { label: 'Bemerkung', value: 'TROX FD-Q-Z-H...', child: true, highlight: true },
  { label: 'Bemerkung 1', child: true },
  { label: 'Bemerkung 2', child: true },
  { label: 'Medium' },
  { label: 'Berechnung', group: '+' },
  { label: 'Hersteller', value: 'TROX', readOnly: true },
  { label: 'Bestellnummer', value: 'FD-Q-Z-H-M-L/...', readOnly: true },
  { label: 'Detailliertheit', value: 'fein' },
];

function PropertyTable() {
  const [active, setActive] = useState('Bezeichnung');

  return (
    <table className="h-[139px] w-full table-fixed border-collapse bg-white">
      <tbody>
        {PROPERTIES.map((row) => (
          <tr key={row.label} onClick={() => setActive(row.label)}>
            <td className="w-[12px] bg-[#efefef] p-0">
              {row.group && (
                <svg viewBox="0 0 8 8" className="size-2" aria-hidden="true">
                  <path d="M.5 .5h7v7h-7z" fill="#fff" stroke="#777" />
                  <path d={row.group === '+' ? 'M4 1v6M1 4h6' : 'M1 4h6'} stroke="#222" />
                </svg>
              )}
            </td>
            <th
              scope="row"
              className={clsx(
                'w-[70px] border border-[#ececec] p-0 text-left leading-[11px] whitespace-nowrap',
                row.group ? 'font-bold' : 'font-normal',
                row.child ? 'pl-[3px]' : 'pl-px',
                active === row.label && 'bg-[#0f74c8] text-white'
              )}
            >
              {row.label}
            </th>
            <td
              className={clsx(
                'border border-[#ececec] p-0 pl-[2px] leading-[11px] whitespace-nowrap',
                row.highlight && 'bg-[#ffffc0]',
                row.readOnly && 'text-[#8a8a8a]'
              )}
            >
              {row.value}
            </td>
          </tr>
        ))}
      </tbody>
    </table>
  );
}

function SidePanel() {
  return (
    <aside className="flex w-[156px] shrink-0 flex-col bg-[#efefef] pr-[3px] text-[8px]">
      <PanelHeader title="19 - Dynamische Liste" />
      <button type="button" className="flex h-3 items-center gap-[2px] border-t border-[#b5b5b5]">
        <Icon name="docs" className="size-[11px]" />
        Dokumente
      </button>
      <DocumentTree />
      <SectionBar icon="building" label="Gebäude" />
      <SectionBar icon="gear" label="Anwendungen" />
      <div className="mb-[2px] flex h-[13px] items-center">
        <Icon name="gear" className="size-[11px]" />
        <button type="button" className="flex-1">Allgemein</button>
        <button type="button" className="flex h-3 w-[77px] items-center gap-[3px] bg-[#0f74c8] pl-[2px] whitespace-nowrap text-white">
          <Icon name="folder" className="size-[10px]" />
          19 - Dynamisch...
        </button>
      </div>
      <PanelHeader title="Eigenschaften Luftdurchlass" />
      <div className="flex h-[18px] items-end gap-1 pl-px">
        {['diamond', 'gearBlue', 'knot'].map((name) => (
          <button key={name} type="button" aria-label={name}>
            <Icon name={name} />
          </button>
        ))}
      </div>
      <PropertyTable />
      <div className="flex-1 bg-white" />
    </aside>
  );
}

/* ---------- drawing ---------- */

const MAGENTA = '#ee00f5';
const PALE = '#f7a8fa';
const GREEN = '#3fae3f';
const MINT = '#8fc98f';

function Elbow({ x, y, size }: { x: number; y: number; size: number }) {
  return (
    <path
      d={`M${x} ${y + 7}a7 7 0 0 0 7-7H${x + size}A${size} ${size} 0 0 1 ${x} ${y + size}z`}
      fill={MAGENTA}
      stroke={PALE}
    />
  );
}

function Chamfered({ x, y, size }: { x: number; y: number; size: number }) {
  return <path d={`M${x} ${y + 2}l2-2h${size - 2}v${size - 1}l-1 1h${1 - size}z`} fill={MAGENTA} stroke={PALE} />;
}

interface DuctProps {
  x: number;
  y: number;
  width: number;
  height: number;
  seams: number[];
  flanges?: number[];
}

function Duct({ x, y, width, height, seams, flanges = [] }: DuctProps) {
  return (
    <g fill="none" stroke={PALE}>
      <rect x={x} y={y} width={width} height={height} fill={MAGENTA} />
      <path d={`M${x} ${y}h${width}M${x} ${y + height}h${width}`} stroke="#6d0071" strokeDasharray="1 7 2 9 1 4" />
      {seams.map((sx) => <path key={sx} d={`M${sx} ${y}v${height}`} />)}
      {flanges.map((fy) => <path key={fy} d={`M${x} ${fy}h${width}`} stroke="#f558f9" />)}
    </g>
  );
}

function Tag({ x, y, to, label }: { x: number; y: number; to: number; label: string }) {
  return (
    <g fill="none" stroke="#cfcfcf">
      <path d={`M${x} ${y}h10v11h-10zM${x + 10} ${y + 6}H${to}`} />
      <text x={x + 5} y={y + 8} textAnchor="middle" fontSize="6" fontFamily="Liberation Sans" fill="#eee" stroke="none">{label}</text>
    </g>
  );
}

function Basin({ x, depth = 22 }: { x: number; depth?: number }) {
  return (
    <g fill="none" stroke={MINT}>
      <path d={`M${x} 282v${depth - 9}q0 9 9 9h14q9 0 9-9V282`} />
      <path d={`M${x + 3} 286.500h26v${depth - 12}q-1 6-7 6H${x + 10}q-6 0-7-6z`} />
      <circle cx={x + 16} cy="291.500" r="1.200" shapeRendering="auto" />
      <circle cx={x + 12} cy="279.500" r="1.200" stroke="#b01818" shapeRendering="auto" />
      <path d={`M${x + 14} 279.500h4`} stroke="#ddd" />
      <circle cx={x + 20} cy="279.500" r="1.200" stroke="#2fd32f" shapeRendering="auto" />
    </g>
  );
}

function Shower({ x }: { x: number }) {
  return (
    <g fill="none" stroke={MINT}>
      <rect x={x} y="282.500" width="36" height="36" />
      <rect x={x + 2} y="284.500" width="32" height="32" rx="4" />
      <rect x={x + 26} y="290.500" width="2" height="2" />
      <circle cx={x + 14} cy="279.500" r="1.200" stroke="#b01818" shapeRendering="auto" />
      <circle cx={x + 21} cy="279.500" r="1.200" stroke="#2fd32f" shapeRendering="auto" />
    </g>
  );
}

function Toilet({ y }: { y: number }) {
  return (
    <g fill="none" stroke={MINT}>
      <rect x="1030.500" y={y - 9} width="5" height="18" />
      <path d={`M1030 ${y - 7}h-7l-7-1c-12 1-12 15 0 16l7-1h7`} />
      <ellipse cx="1015.500" cy={y} rx="7.500" ry="6.500" />
      <circle cx="1038.500" cy={y} r="1.700" shapeRendering="auto" />
      <circle cx="1038.500" cy={y - 4} r="1.200" stroke="#2fd32f" shapeRendering="auto" />
    </g>
  );
}

function Outlet({ x, y, dashed }: { x: number; y: number; dashed?: boolean }) {
  return (
    <g>
      <rect x={x} y={y} width="26" height="26" fill="#c9ccd8" stroke="#f2f2f2" strokeDasharray={dashed ? '3 1' : undefined} />
      <rect x={x + 26} y={y + 7} width="3" height="12" fill="#f2f2f2" />
      <path d={`M${x + 21} ${y + 9}l10 8`} stroke="#e8e8e8" strokeWidth=".8" shapeRendering="auto" />
    </g>
  );
}

function RoomStamp({ x, y, width, height, no, name }: { x: number; y: number; width: number; height: number; no: string; name: string }) {
  return (
    <g fill="none" stroke="#d0183c">
      <rect x={x} y={y} width={width} height={height} fill="#9390ad" stroke="none" />
      <rect x={x + 1} y={y + 1} width={width - 2} height={height - 2} rx="10" shapeRendering="auto" />
      <path d={`M${x + 1} ${y + height / 2}h${width - 2}`} />
      <g fill="#d0183c" stroke="none" fontFamily="Liberation Sans" fontSize="6" textAnchor="middle">
        <text x={x + width / 2} y={y + height / 2 - 1}>{no}</text>
        <text x={x + width / 2} y={y + height / 2 + 6}>{name}</text>
      </g>
    </g>
  );
}

function Drawing() {
  return (
    <svg className="absolute inset-0 size-full" aria-label="Grundriss">
      <g transform="translate(-156 -102)" shapeRendering="crispEdges">
        <path d="M186.500 102v428.500H1280" {...stroke('#a8a8a8', 1)} />

        <Elbow x={488} y={161} size={21} />
        <Elbow x={542} y={160} size={25} />
        <Elbow x={591} y={158} size={30} />
        <Chamfered x={487} y={204} size={16} />
        <Chamfered x={541} y={203} size={20} />
        <Chamfered x={595} y={197} size={25} />

        <Duct x={720} y={90} width={135} height={43} seams={[787]} flanges={[129]} />
        <Duct x={727} y={145} width={134} height={58} seams={[794]} flanges={[149, 199]} />
        <Duct x={893} y={90} width={67} height={40} seams={[]} />
        <Duct x={929} y={148} width={150} height={52} seams={[996, 1013]} />
        <Tag x={689} y={111} to={720} label="L2" />
        <Tag x={690} y={172} to={727} label="L3" />

        <g {...stroke(GREEN, 1)}>
          <rect x="392.500" y="271.500" width="654" height="221" />
          <rect x="403.500" y="282.500" width="200" height="200" />
          <rect x="614.500" y="282.500" width="218" height="200" />
          <rect x="843.500" y="282.500" width="192" height="200" />
        </g>

        <Basin x={485.5} />
        <Basin x={537.5} depth={26} />
        <Basin x={688.5} />
        <Basin x={741.5} />
        <Shower x={907.5} />
        <Shower x={960.5} />
        <Toilet y={326} />
        <Toilet y={373} />
        <Toilet y={417} />

        <RoomStamp x={429} y={302} width={22} height={22} no="001" name="Büro" />
        <RoomStamp x={640} y={295} width={22} height={22} no="002" name="Chef" />
        <RoomStamp x={861} y={291} width={39} height={24} no="003" name="Besprechung" />

        <Outlet x={436} y={334} dashed />
        <Outlet x={432} y={423} dashed />
        <Outlet x={639} y={328} />
        <Outlet x={643} y={424} />
        <Outlet x={781} y={326} />
        <Outlet x={777} y={426} />
        <Outlet x={868} y={326} />
        <Outlet x={870} y={429} />

        <circle cx="659" cy="402" r="5.200" {...stroke('#3f8fe0', 1.800)} shapeRendering="auto" />
        <path d="M654 402a5 5 0 0 1 3-4.700" {...stroke('#7fe0f0', 1.800)} shapeRendering="auto" />
      </g>
    </svg>
  );
}

function LayoutTabs() {
  return (
    <div className="flex h-[11px] items-stretch border-t border-white bg-[#efefef] text-[8px] leading-[10px]">
      {['M6 2L3 5l3 3', 'M4 2l3 3-3 3'].map((d) => (
        <button key={d} type="button" aria-label="Blättern" className="flex w-[11px] justify-center border border-[#b5b5b5] bg-[#f7f7f7]">
          <svg viewBox="0 0 10 10" className="size-2"><path d={d} fill="#777" /></svg>
        </button>
      ))}
      <button type="button" className="bg-black pr-[9px] pl-[9px] text-white [clip-path:polygon(0_0,100%_0,calc(100%-5px)_100%,4px_100%)]">
        Modell
      </button>
      <button type="button" className="-ml-[5px] flex bg-white text-black [clip-path:polygon(5px_0,100%_0,100%_100%,0_100%)]">
        <span className="pl-[6px]">Neues Layout</span>
        <svg viewBox="0 0 10 10" className="h-[10px] w-[10px]" aria-hidden="true">
          <path d="M9 0h1v10H4z" fill="#efefef" />
          <path d="M9 0L4 10" stroke="#222" />
        </svg>
      </button>
    </div>
  );
}

function StatusBar() {
  return (
    <footer className="flex h-7 items-start justify-between bg-[#efefef]">
      <div className="pt-[5px] pl-px font-[family-name:'Liberation_Sans',sans-serif] text-[7px] leading-[10px] text-[#222]">
        <p>Elemente auswählen</p>
        <div className="flex gap-[9px]">
          <label htmlFor="command">Id. Element oder Rechteck (2)</label>
          <input id="command" className="h-[10px] w-[6px] bg-white" />
        </div>
      </div>
      <div className="flex h-full items-end">
        <div role="progressbar" aria-label="Fortschritt" aria-valuenow={0} className="mt-1 mr-[2px] h-[9px] w-[318px] self-start border border-[#c6c6c6] bg-[#e3e3e3]" />
        <div className="h-[27px] w-[5px] bg-[#2093d6]" />
      </div>
    </footer>
  );
}

export default function App() {
  return (
    <div className="flex h-screen flex-col overflow-hidden bg-[#075e98] font-[family-name:'Roboto','Open_Sans',sans-serif] text-black [text-rendering:geometricPrecision]">
      <div className="flex min-h-0 flex-1 flex-col border-r-2 border-black">
        <TitleBar />
        <Toolbars />
        <div className="flex min-h-0 flex-1 border-t border-[#d5d5d5]">
          <SidePanel />
          <main className="flex min-w-0 flex-1 flex-col">
            <div className="relative flex-1 overflow-hidden bg-black">
              <Drawing />
            </div>
            <LayoutTabs />
          </main>
        </div>
        <StatusBar />
      </div>
      <div className="h-8 shrink-0" />
    </div>
  );
}
